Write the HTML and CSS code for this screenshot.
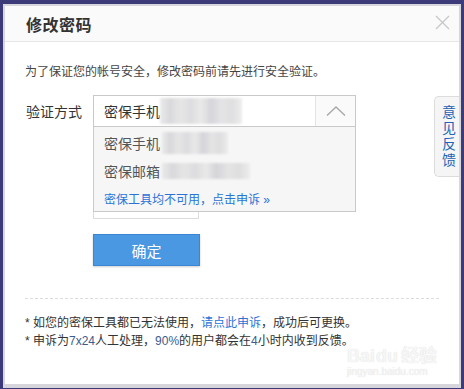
FILE: index.html
```html
<!DOCTYPE html>
<html lang="zh">

<head>
    <meta charset="UTF-8">
    <meta name="viewport" content="width=device-width, initial-scale=1.0">
    <title>修改密码</title>
    <link rel="stylesheet" href="styles.css">
</head>

<body>
    <div class="dialog">
        <div class="dialog-header">
            <h2>修改密码</h2>
            <svg class="close-btn" width="15" height="15" viewBox="0 0 15 15">
                <path d="M1 1 L14 14 M14 1 L1 14" stroke="#c9c9c9" stroke-width="1.4" fill="none" />
            </svg>
        </div>

        <div class="dialog-body">
            <p class="intro">为了保证您的帐号安全，修改密码前请先进行安全验证。</p>

            <div class="form-row">
                <label>验证方式</label>
                <div class="select">
                    <div class="select-value">
                        <span>密保手机</span><span class="masked masked-lg"></span>
                    </div>
                    <div class="select-arrow">
                        <svg width="20" height="10" viewBox="0 0 20 10">
                            <path d="M1 9.5 L10 1 L19 9.5" stroke="#a9a9a9" stroke-width="1.4" fill="none" />
                        </svg>
                    </div>

                    <!-- 下拉菜单 -->
                    <ul class="select-menu">
                        <li>密保手机<span class="masked masked-sm"></span></li>
                        <li>密保邮箱<span class="masked masked-md"></span></li>
                        <li class="menu-link">密保工具均不可用，点击申诉 »</li>
                    </ul>
                </div>
            </div>

            <div class="hidden-input"></div>

            <button class="btn-primary">确定</button>

            <div class="divider"></div>

            <ul class="notes">
                <li>* 如您的密保工具都已无法使用，<a href="#">请点此申诉</a>，成功后可更换。</li>
                <li>* 申诉为<em>7x24</em>人工处理，<em>90%</em>的用户都会在<em>4</em>小时内收到反馈。</li>
            </ul>
        </div>

        <div class="feedback-tab"><span>意见反馈</span></div>

        <div class="watermark">
            <span class="wm-logo">Bai<b>du</b>经验</span>
            <span class="wm-url">jingyan.baidu.com</span>
        </div>
    </div>
</body>

</html>
```

FILE: styles.css
```css
:root {
    --page-bg: #3c3a78;
    --frame: #d6d6dc;
    --text-color: #333;
    --link-color: #2a74d6;
    --border-color: #c9c9c9;
}

body {
    margin: 0;
    padding: 4px 3px 3px 3px;
    background: var(--page-bg);
    font-family: "Liberation Sans", "Noto Sans CJK SC", sans-serif;
    color: var(--text-color);
}

.dialog {
    position: relative;
    width: 454px;
    height: 378px;
    border: 2px solid var(--frame);
    border-bottom-width: 4px;
    background: #fff;
    overflow: hidden;
}

.dialog-header {
    height: 35px;
    background: #fafafa;
    border-bottom: 1px solid #e6e6e6;
    display: flex;
    align-items: center;
    justify-content: space-between;
    padding: 0 9px 0 21px;
}

.dialog-header h2 {
    margin: 0;
    font-size: 16px;
    font-weight: 700;
    color: #333;
    letter-spacing: 0.5px;
}

.close-btn {
    display: block;
    margin-top: -2px;
}

.dialog-body {
    padding: 0 20px;
}

.intro {
    margin: 21px 0 0;
    font-size: 12px;
    line-height: 18px;
    color: #444;
}

.form-row {
    display: flex;
    align-items: center;
    margin-top: 14px;
}

.form-row label {
    width: 67px;
    padding-left: 1px;
    font-size: 14px;
    color: #333;
}

.select {
    position: relative;
    width: 261px;
    height: 30px;
    border: 1px solid var(--border-color);
    border-bottom: none;
    display: flex;
}

.select-value {
    flex: 1;
    display: flex;
    align-items: center;
    padding-left: 10px;
    font-size: 14px;
    color: #333;
    background: #fff;
}

.select-arrow {
    width: 39px;
    border-left: 1px solid #e4e4e4;
    background: #fafafa;
    display: flex;
    align-items: center;
    justify-content: center;
}

.select-menu {
    position: absolute;
    top: 30px;
    left: -1px;
    width: 261px;
    margin: 0;
    padding: 2px 0 0;
    list-style: none;
    background: #f6f6f6;
    border: 1px solid var(--border-color);
    z-index: 5;
}

.select-menu li {
    height: 28px;
    display: flex;
    align-items: center;
    padding-left: 10px;
    font-size: 14px;
    color: #555;
}

.select-menu .menu-link {
    height: 26px;
    font-size: 12px;
    color: var(--link-color);
}

.masked {
    display: inline-block;
    height: 22px;
    background: linear-gradient(90deg, #e9e9ea 0%, #d6d6d9 12%, #e4e4e4 25%, #dadadd 38%, #e8e8e8 50%, #d2d2d7 62%, #e2e2e4 75%, #dcdcde 88%, #ececec 100%);
    filter: blur(1px);
    opacity: 0.9;
}

.masked-lg {
    width: 82px;
    height: 26px;
}

.masked-sm {
    width: 66px;
    margin-left: 2px;
}

.masked-md {
    width: 88px;
    height: 16px;
    margin-left: 2px;
}

.hidden-input {
    width: 104px;
    height: 30px;
    margin: 61px 0 0 68px;
    border: 1px solid #dcdcdc;
}

.btn-primary {
    display: block;
    width: 107px;
    height: 32px;
    margin: 15px 0 0 68px;
    padding: 0;
    background: #4b98e2;
    border: 1px solid #3b86d4;
    color: #fff;
    font-family: inherit;
    font-size: 15px;
    box-shadow: 0 1px 2px rgba(0, 0, 0, 0.2);
    cursor: pointer;
}

.divider {
    margin-top: 32px;
    border-top: 1px dashed #dcdcdc;
}

.notes {
    margin: 15px 0 0;
    padding: 0;
    list-style: none;
    font-size: 12px;
    line-height: 18px;
    color: #333;
}

.notes a {
    color: var(--link-color);
    text-decoration: none;
}

.notes em {
    font-style: normal;
    color: #3c5c8e;
}

.feedback-tab {
    position: absolute;
    top: 90px;
    right: 0;
    width: 24px;
    height: 79px;
    background: #f5f5f5;
    border: 1px solid #dcdcdc;
    border-right: none;
    border-radius: 5px 0 0 5px;
    display: flex;
    align-items: center;
    justify-content: center;
}

.feedback-tab span {
    writing-mode: vertical-rl;
    text-orientation: upright;
    margin-left: 2px;
    font-size: 14px;
    line-height: 16px;
    letter-spacing: 2px;
    color: #2262b4;
}

.watermark {
    position: absolute;
    right: 22px;
    bottom: 6px;
    display: flex;
    flex-direction: column;
    align-items: flex-start;
    pointer-events: none;
}

.wm-logo {
    font-size: 18px;
    font-weight: 700;
    line-height: 20px;
    color: #f6f6f6;
    text-shadow: 0 0 1px #d8d8d8;
}

.wm-logo b {
    margin: 0 3px 0 1px;
}

.wm-url {
    font-size: 10px;
    line-height: 12px;
    color: #f4f4f4;
    text-shadow: 0 0 1px #dadada;
}
```
